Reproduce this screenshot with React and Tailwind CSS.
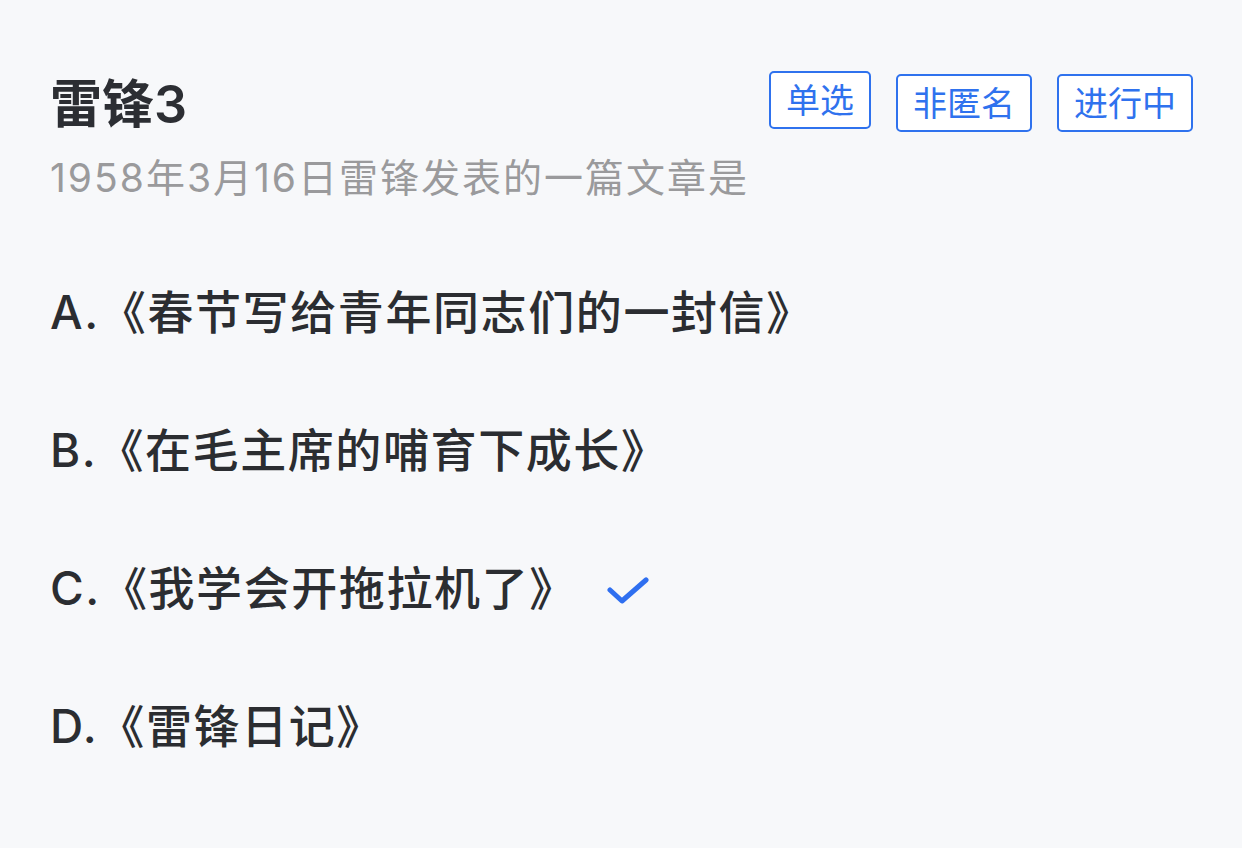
import { Fragment } from "react";

const font = { fontFamily: '"Inter", "Noto Sans CJK SC", sans-serif' };

const tags = [
  { label: "单选", offset: "mt-0" },
  { label: "非匿名", offset: "mt-[3px]" },
  { label: "进行中", offset: "mt-[3px]" },
];

const options = [
  { key: "A", text: "《春节写给青年同志们的一封信》" },
  { key: "B", text: "《在毛主席的哺育下成长》" },
  { key: "C", text: "《我学会开拖拉机了》", correct: true },
  { key: "D", text: "《雷锋日记》" },
];

const CheckIcon = () => (
  <svg width="44" height="32" viewBox="0 0 44 32" fill="none">
    <path
      d="M3 14 L15 25 L39 4"
      stroke="#2f6ff0"
      strokeWidth="5"
      strokeLinecap="round"
      strokeLinejoin="round"
    />
  </svg>
);

export default function App() {
  return (
    <Fragment>
      <div
        className="w-[1242px] h-[848px] bg-[#f7f8fa] pl-[50px] pr-[49px] pt-[71px] overflow-hidden"
        style={font}
      >
        <div className="flex items-start justify-between">
          <h1 className="mt-[6px] text-[52px] leading-[56px] font-semibold text-[#2c2e33]">
            雷锋3
          </h1>
          <div className="flex items-start gap-[25px]">
            {tags.map((tag) => (
              <span
                key={tag.label}
                className={`${tag.offset} h-[58px] px-[15px] flex items-center border-2 border-[#2f72ee] rounded-[5px] bg-white text-[34px] text-[#2f72ee]`}
              >
                {tag.label}
              </span>
            ))}
          </div>
        </div>
        <p className="mt-[21px] text-[39px] leading-[48px] text-[#9a9a9c] tracking-[2px]">
          1958年3月16日雷锋发表的一篇文章是
        </p>

        <div className="mt-[86px] flex flex-col gap-[90px]">
          {options.map((opt) => (
            <div key={opt.key} className="flex items-center h-[48px]">
              <span className="text-[46px] leading-[48px] font-medium text-[#2b2d31] tracking-[1.6px]">
                {opt.key}.{opt.text}
              </span>
              {opt.correct && (
                <span className="ml-[30px] mt-[8px]">
                  <CheckIcon />
                </span>
              )}
            </div>
          ))}
        </div>
      </div>
    </Fragment>
  );
}
